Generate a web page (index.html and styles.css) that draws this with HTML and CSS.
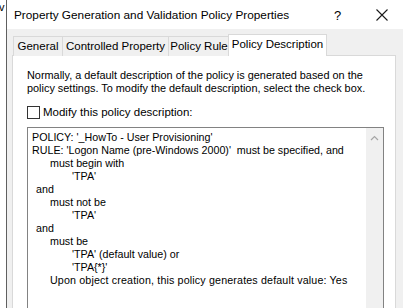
FILE: index.html
```html
<!DOCTYPE html>
<html>
<head>
<meta charset="utf-8">
<link rel="stylesheet" href="styles.css">
</head>
<body>
<div class="screen">
  <div class="behind"><span class="behind-v">v</span></div>
  <div class="dialog">
    <div class="titlebar">
      <span class="title">Property Generation and Validation Policy Properties</span>
      <span class="help">?</span>
      <span class="close">
        <svg width="12" height="12" viewBox="0 0 12 12"><path d="M0.5 0.5 L11.5 11.5 M11.5 0.5 L0.5 11.5" stroke="#1a1a1a" stroke-width="1.1" fill="none"/></svg>
      </span>
    </div>
    <div class="body">
      <div class="tabs">
        <div class="tab t-general">General</div>
        <div class="tab t-controlled">Controlled Property</div>
        <div class="tab t-rule">Policy Rule</div>
        <div class="tab tab-active t-desc">Policy Description</div>
      </div>
      <div class="panel">
        <p class="intro">Normally, a default description of the policy is generated based on the<br>policy settings. To modify the default description, select the check box.</p>
        <label class="check"><span class="box"></span><span>Modify this policy description:</span></label>
        <div class="textbox">
          <div class="text">
            <div class="l0">POLICY: '_HowTo - User Provisioning'</div>
            <div class="l0">RULE: 'Logon Name (pre-Windows 2000)'&nbsp; must be specified, and</div>
            <div class="l1">must begin with</div>
            <div class="l2">'TPA'</div>
            <div class="la">and</div>
            <div class="l1">must not be</div>
            <div class="l2">'TPA'</div>
            <div class="la">and</div>
            <div class="l1">must be</div>
            <div class="l2">'TPA' (default value) or</div>
            <div class="l2">'TPA{*}'</div>
            <div class="l1 wide">Upon object creation, this policy generates default value: Yes</div>
          </div>
          <div class="scrollbar">
            <svg width="9" height="6" viewBox="0 0 9 6"><path d="M1 5 L4.5 1.5 L8 5" stroke="#a6a6a6" stroke-width="1.2" fill="none"/></svg>
          </div>
        </div>
      </div>
    </div>
  </div>
</div>
</body>
</html>
```
FILE: styles.css
```css
html, body {
  margin: 0;
  padding: 0;
  background: #ffffff;
}
.screen {
  width: 403px;
  height: 308px;
  overflow: hidden;
  display: flex;
  font-family: "Liberation Sans", Arial, sans-serif;
  color: #000;
  white-space: nowrap;
}
.behind {
  width: 6px;
  flex: none;
  background: #fff;
  overflow: hidden;
}
.behind-v {
  display: block;
  font-size: 11px;
  line-height: 12px;
  margin-left: -1px;
  margin-top: 1px;
  color: #000;
}
.dialog {
  flex: 1;
  min-width: 0;
  border-left: 1px solid #5f5f5f;
  display: flex;
  flex-direction: column;
  background: #f0f0f0;
}
.titlebar {
  height: 29px;
  flex: none;
  background: #ffffff;
  display: flex;
  align-items: center;
  padding-left: 7px;
}
.title {
  font-size: 11.8px;
  flex: 1;
  padding-top: 1px;
  color: #000;
}
.help {
  font-size: 13px;
  width: 42px;
  padding-top: 1px;
}
.close {
  width: 27px;
  display: flex;
  padding-top: 1px;
}
.body {
  flex: 1;
  min-height: 0;
  padding: 6px 7px 0 5px;
  display: flex;
  flex-direction: column;
}
.tabs {
  display: flex;
  align-items: flex-end;
  height: 21px;
  margin-bottom: -1px;
  position: relative;
  z-index: 1;
  padding-left: 1px;
}
.tab {
  box-sizing: border-box;
  height: 20px;
  border: 1px solid #d9d9d9;
  border-bottom: none;
  border-right: none;
  background: #f0f0f0;
  font-size: 11.5px;
  line-height: 19px;
  text-align: center;
}
.t-general { width: 49px; }
.t-controlled { width: 106px; }
.t-rule { width: 62px; border-right: 1px solid #d9d9d9; margin-right: -2px; }
.tab-active {
  height: 22px;
  background: #ffffff;
  border: 1px solid #d9d9d9;
  border-bottom: none;
  line-height: 19px;
  position: relative;
  z-index: 2;
}
.t-desc { width: 99px; }
.panel {
  flex: 1;
  min-height: 0;
  background: #ffffff;
  border: 1px solid #d9d9d9;
  border-bottom: none;
  padding: 13px 11px 0 14px;
  display: flex;
  flex-direction: column;
}
.intro {
  margin: 0;
  font-size: 10.9px;
  line-height: 13px;
}
.check {
  display: flex;
  align-items: center;
  margin-top: 10px;
  font-size: 11.5px;
  height: 14px;
}
.box {
  box-sizing: border-box;
  width: 13px;
  height: 13px;
  border: 1px solid #333333;
  background: #fff;
  margin-right: 3px;
}
.textbox {
  margin-top: 8px;
  flex: 1;
  border: 1px solid #828282;
  border-bottom: none;
  display: flex;
}
.text {
  flex: 1;
  padding: 3px 0 0 4px;
  font-size: 10.7px;
  line-height: 13px;
}
.l0 { padding-left: 0; }
.la { padding-left: 4px; }
.l1 { padding-left: 18px; }
.l2 { padding-left: 40px; }
.wide { letter-spacing: 0.15px; }
.scrollbar {
  width: 17px;
  background: #f0f0f0;
  display: flex;
  justify-content: center;
  align-items: flex-start;
  padding-top: 7px;
  box-sizing: border-box;
}
```
